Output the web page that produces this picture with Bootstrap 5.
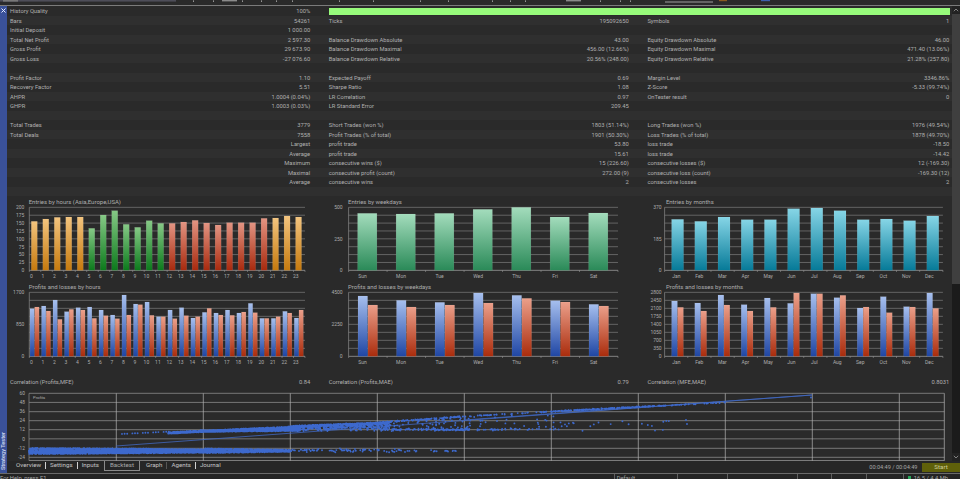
<!DOCTYPE html>
<html lang="en"><head><meta charset="utf-8">
<link href="https://cdn.jsdelivr.net/npm/bootstrap@5.3.0/dist/css/bootstrap.min.css" rel="stylesheet">
<style>
html,body{height:479px;overflow:hidden;background:#2a2a2a;}
body{font-family:Roboto,"Liberation Sans",sans-serif;font-size:5.8px;color:#b0b0b0;line-height:10px;width:960px;}
svg{display:block;}
svg text{font-family:Roboto,"Liberation Sans",sans-serif;fill:#adadad;}
.mainrow{height:467px;}
.sidebar{width:7px;background:#3a5199;flex:none;}
.sideclose{padding:2px 0 0 1px;}
.sidetitle{writing-mode:vertical-rl;transform:rotate(180deg);font-size:5.6px;line-height:7px;font-weight:500;color:#d3dbf2;padding-top:3px;}
.rightcol{width:953px;flex:none;}
.upperarea{height:455px;}
.scrollarea{width:945px;flex:none;}
.scrollcol{width:8px;flex:none;background:#1b1b1b;}
.scrollbtn{height:8px;background:#222;padding:2px 1px;}
.scrollthumb{height:270px;background:#3f3f3f;}
.strow{display:grid;grid-template-columns:318.7px 318.7px 1fr;height:9.5px;white-space:nowrap;}
.strow:nth-child(odd){background:#2a2a2a;}
.strow:nth-child(even){background:#2f2f2f;}
.stcell{display:flex;justify-content:space-between;padding:0 15.5px 0 3px;}
.stcell:last-child{padding-right:2.7px;}
.qbar{grid-column:2/4;background:#97fb7b;margin:1.5px 2px 1px 3px;}
.chartsrow{height:180.5px;background:#2a2a2a;}
.chartbox{width:318.7px;flex:none;}
.chartbox:last-child{width:307.6px;}
.tabsrow{height:12px;background:#262626;padding-left:5px;}
.tabitem{color:#c4c4c4;font-size:6.2px;line-height:7px;padding:0 4px 0 4px;border-right:1px solid #d0d0d0;margin-top:1px;height:7px;white-space:nowrap;}
.tabitem.lastone{border-right:0;}
.tabitem.dimsep{border-right-color:#555;}
.tabitem.activetab{border:1px solid #8b8b8b;border-top:0;height:10px;margin-top:0;padding:1px 5px 0;margin-left:1px;margin-right:2px;color:#a8a8a8;line-height:7px;}
.tabspacer{flex:1 1 auto;}
.timertext{color:#a6a6a6;font-size:5.6px;line-height:9px;margin-top:1.5px;margin-right:4.5px;}
.startbtn{background:#5f600a;color:#cfcf9a;width:38px;height:9px;line-height:9px;text-align:center;margin-top:1.5px;font-size:6.2px;}
.statusbar{display:grid;grid-template-columns:613.7px 63.6px 49.4px 70.6px 34px 35px 36.4px 1fr;height:6px;border-top:1px solid #6a6a6a;background:#242424;line-height:8px;color:#a8a8a8;white-space:nowrap;}
.statcell{border-left:1px solid #5f5f5f;padding-left:2px;height:6px;}
.statcell:first-child{border-left:0;padding-left:0;}
.statcell.memcell{padding-left:4px;display:flex;gap:3px;}
.memdot{width:3px;height:3px;background:#26a65a;margin-top:2px;}
</style></head><body>
<svg width="960" height="6" viewBox="0 0 960 6" aria-hidden="true">
<rect width="960" height="6" fill="#2a2a2a"/>
<rect x="0" y="0" width="176" height="1.6" fill="#4d4d58"/><rect x="3" y="0" width="15" height="1.6" fill="#777"/>
<rect x="222" y="0" width="15" height="1.4" fill="#8a8a8a"/><rect x="566" y="0" width="15" height="1.4" fill="#8a8a8a"/>
<g fill="#ddd"><rect x="193" y="0.6" width="1" height="1"/><rect x="213" y="0.6" width="1" height="1"/><rect x="242" y="0.6" width="1" height="1"/><rect x="261" y="0.6" width="1" height="1"/><rect x="276" y="0.6" width="1" height="1"/><rect x="292" y="0.6" width="1" height="1"/><rect x="339" y="0.6" width="1" height="1"/><rect x="373" y="0.6" width="1" height="1"/><rect x="420" y="0.6" width="1" height="1"/><rect x="448" y="0.6" width="1" height="1"/><rect x="492" y="0.6" width="1" height="1"/><rect x="510" y="0.6" width="1" height="1"/><rect x="525" y="0.6" width="1" height="1"/><rect x="600" y="0.6" width="1" height="1"/><rect x="620" y="0.6" width="1" height="1"/><rect x="630" y="0.6" width="1" height="1"/></g>
<rect x="665" y="1.6" width="48" height="0.8" fill="#bbb"/><rect x="719" y="0" width="8" height="1.2" fill="#8a5a20"/><rect x="761" y="0" width="9" height="1.2" fill="#3d5fae"/>
<rect x="0" y="5" width="960" height="1" fill="#7b7b7b"/>
</svg>
<div class="mainrow d-flex">
 <div class="sidebar d-flex flex-column justify-content-between">
  <div class="sideclose"><svg width="5" height="5" viewBox="0 0 5 5"><path d="M.5.5l4 4M4.5.5l-4 4" stroke="#e6ecff" stroke-width="1"/></svg></div>
  <div class="sidetitle">Strategy Tester</div>
 </div>
 <div class="rightcol">
  <div class="upperarea d-flex">
   <div class="scrollarea">
    <div>
     <div class="strow"><div class="stcell"><span>History Quality</span><span>100%</span></div><div class="qbar"></div></div>
     <div class="strow"><div class="stcell"><span>Bars</span><span>54261</span></div><div class="stcell"><span>Ticks</span><span>195092650</span></div><div class="stcell"><span>Symbols</span><span>1</span></div></div>
     <div class="strow"><div class="stcell"><span>Initial Deposit</span><span>1 000.00</span></div><div class="stcell"></div><div class="stcell"></div></div>
     <div class="strow"><div class="stcell"><span>Total Net Profit</span><span>2 597.30</span></div><div class="stcell"><span>Balance Drawdown Absolute</span><span>43.00</span></div><div class="stcell"><span>Equity Drawdown Absolute</span><span>46.00</span></div></div>
     <div class="strow"><div class="stcell"><span>Gross Profit</span><span>29 673.90</span></div><div class="stcell"><span>Balance Drawdown Maximal</span><span>456.00 (12.66%)</span></div><div class="stcell"><span>Equity Drawdown Maximal</span><span>471.40 (13.06%)</span></div></div>
     <div class="strow"><div class="stcell"><span>Gross Loss</span><span>-27 076.60</span></div><div class="stcell"><span>Balance Drawdown Relative</span><span>20.56% (248.00)</span></div><div class="stcell"><span>Equity Drawdown Relative</span><span>21.28% (257.80)</span></div></div>
     <div class="strow"></div>
     <div class="strow"><div class="stcell"><span>Profit Factor</span><span>1.10</span></div><div class="stcell"><span>Expected Payoff</span><span>0.69</span></div><div class="stcell"><span>Margin Level</span><span>3346.86%</span></div></div>
     <div class="strow"><div class="stcell"><span>Recovery Factor</span><span>5.51</span></div><div class="stcell"><span>Sharpe Ratio</span><span>1.08</span></div><div class="stcell"><span>Z-Score</span><span>-5.33 (99.74%)</span></div></div>
     <div class="strow"><div class="stcell"><span>AHPR</span><span>1.0004 (0.04%)</span></div><div class="stcell"><span>LR Correlation</span><span>0.97</span></div><div class="stcell"><span>OnTester result</span><span>0</span></div></div>
     <div class="strow"><div class="stcell"><span>GHPR</span><span>1.0003 (0.03%)</span></div><div class="stcell"><span>LR Standard Error</span><span>209.45</span></div><div class="stcell"></div></div>
     <div class="strow"></div>
     <div class="strow"><div class="stcell"><span>Total Trades</span><span>3779</span></div><div class="stcell"><span>Short Trades (won %)</span><span>1803 (51.14%)</span></div><div class="stcell"><span>Long Trades (won %)</span><span>1976 (49.54%)</span></div></div>
     <div class="strow"><div class="stcell"><span>Total Deals</span><span>7558</span></div><div class="stcell"><span>Profit Trades (% of total)</span><span>1901 (50.30%)</span></div><div class="stcell"><span>Loss Trades (% of total)</span><span>1878 (49.70%)</span></div></div>
     <div class="strow"><div class="stcell"><span></span><span>Largest</span></div><div class="stcell"><span>profit trade</span><span>53.80</span></div><div class="stcell"><span>loss trade</span><span>-18.50</span></div></div>
     <div class="strow"><div class="stcell"><span></span><span>Average</span></div><div class="stcell"><span>profit trade</span><span>15.61</span></div><div class="stcell"><span>loss trade</span><span>-14.42</span></div></div>
     <div class="strow"><div class="stcell"><span></span><span>Maximum</span></div><div class="stcell"><span>consecutive wins ($)</span><span>15 (226.60)</span></div><div class="stcell"><span>consecutive losses ($)</span><span>12 (-169.30)</span></div></div>
     <div class="strow"><div class="stcell"><span></span><span>Maximal</span></div><div class="stcell"><span>consecutive profit (count)</span><span>272.00 (9)</span></div><div class="stcell"><span>consecutive loss (count)</span><span>-169.30 (12)</span></div></div>
     <div class="strow"><div class="stcell"><span></span><span>Average</span></div><div class="stcell"><span>consecutive wins</span><span>2</span></div><div class="stcell"><span>consecutive losses</span><span>2</span></div></div>
     <div class="strow"></div>
    </div>
    <div class="chartsrow d-flex" id="charts"></div>
    <div class="strow"><div class="stcell"><span>Correlation (Profits,MFE)</span><span>0.84</span></div><div class="stcell"><span>Correlation (Profits,MAE)</span><span>0.79</span></div><div class="stcell"><span>Correlation (MFE,MAE)</span><span>0.8031</span></div></div>
    <div id="scatter"></div>
   </div>
   <div class="scrollcol d-flex flex-column">
    <div class="scrollbtn"><svg width="6" height="4" viewBox="0 0 6 4"><path d="M.8 3.2L3 1l2.2 2.2" fill="none" stroke="#999" stroke-width=".8"/></svg></div>
    <div class="scrollthumb"></div>
    <div class="flex-grow-1"></div>
    <div class="scrollbtn"><svg width="6" height="4" viewBox="0 0 6 4"><path d="M.8.8L3 3l2.2-2.2" fill="none" stroke="#999" stroke-width=".8"/></svg></div>
   </div>
  </div>
  <div class="tabsrow d-flex">
   <div class="tabitem">Overview</div><div class="tabitem">Settings</div><div class="tabitem lastone">Inputs</div>
   <div class="tabitem activetab">Backtest</div>
   <div class="tabitem dimsep">Graph</div><div class="tabitem">Agents</div><div class="tabitem lastone">Journal</div>
   <div class="tabspacer"></div>
   <div class="timertext">00:04:49 / 00:04:49</div>
   <div class="startbtn">Start</div>
  </div>
 </div>
</div>
<div class="statusbar"><div class="statcell">For Help, press F1</div><div class="statcell">Default</div><div class="statcell"></div><div class="statcell"></div><div class="statcell"></div><div class="statcell"></div><div class="statcell"></div><div class="statcell memcell"><span class="memdot"></span><span>16.5 / 4.4 Mb</span></div></div>
<script>
(function(){
var grads={orange:['#f3c47e','#c67a0e'],green:['#86c986','#0c7a1c'],red:['#e39482','#a82a0e'],sea:['#a3dcbc','#2a8a58'],teal:['#86d5e6','#067a98'],blue:['#a6bfee','#1f46a4'],rust:['#eb9f8a','#aa2c0c']};
var defs='<defs>';for(var k in grads){defs+='<linearGradient id="g'+k+'" x1="0" y1="0" x2="0" y2="1"><stop offset="0" stop-color="'+grads[k][0]+'"/><stop offset="1" stop-color="'+grads[k][1]+'"/></linearGradient>';}defs+='</defs>';
function panel(o){
 var s='',L=o.left,R=o.right,T=o.top,B=o.bottom,i;
 for(i=0;i<=8;i++){var y=T+(B-T)*i/8;s+='<line x1="'+L+'" x2="'+R+'" y1="'+y+'" y2="'+y+'" stroke="'+(i==8?'#a8a8a8':'#7d7d7d')+'" stroke-width=".7"/>';}
 s+='<line x1="'+L+'" x2="'+L+'" y1="'+T+'" y2="'+B+'" stroke="#8a8a8a" stroke-width=".7"/>';
 s+='<text x="'+o.tx+'" y="'+(T-3.2)+'" font-size="6">'+o.title+'</text>';
 var yl=o.ylabels;for(i=0;i<yl.length;i++){var yy=T+(B-T)*i/(yl.length-1);s+='<text x="'+(L-o.yoff)+'" y="'+(yy+1.9)+'" font-size="5" text-anchor="end">'+yl[i]+'</text>';}
 var n=o.labels.length,p=(R-L)/n;
 for(i=0;i<=n;i++){var tx=L+p*i;s+='<line x1="'+tx+'" x2="'+tx+'" y1="'+B+'" y2="'+(B+1.6)+'" stroke="#999" stroke-width=".6"/>';}
 for(i=0;i<n;i++){s+='<text x="'+(o.lx(i))+'" y="'+(B+7.4)+'" font-size="5" text-anchor="middle">'+o.labels[i]+'</text>';}
 o.bars.forEach(function(b){s+='<rect x="'+b.x+'" y="'+b.y+'" width="'+b.w+'" height="'+(B-b.y)+'" fill="url(#g'+b.c+')" stroke="rgba(255,255,255,.18)" stroke-width=".4"/>';});
 return s;
}
function Y(v){return 190+v/3;}
var hours=[];for(var h=0;h<24;h++)hours.push(h);
var t1=[94,87,82,81,81,115,75,62,103,112,92,100,100,96,91,99,105,98,98,98,85,84,78,81];
var b1=t1.map(function(v,i){return{x:31.3+i*11.49,y:Y(v),w:6,c:i<5||i>20?'orange':(i<12?'green':'red')};});
var pb=[356,348,330,365,353,351,360,375,315,342,336,380,360,353,384,367,369,360,369,340,385,385,364,384];
var pr=[351,363,388,358,360,385,377,386,375,344,376,380,386,377,380,355,375,376,366,368,385,380,369,360];
var b2=[];pb.forEach(function(v,i){b2.push({x:30+i*11.49,y:Y(v),w:4.4,c:'blue'});b2.push({x:34.7+i*11.49,y:Y(pr[i]),w:4.4,c:'rust'});});
var c1=defs+panel({left:29.3,right:305,top:Y(52),bottom:Y(241),tx:28.7,title:'Entries by hours (Asia,Europe,USA)',yoff:5,ylabels:[200,175,150,125,100,75,50,25,0],labels:hours,lx:function(i){return 31.5+i*11.49;},bars:b1})
 +panel({left:29.3,right:305,top:Y(307),bottom:Y(499),tx:28.7,title:'Profits and losses by hours',yoff:5,ylabels:[1700,850,0],labels:hours,lx:function(i){return 31.5+i*11.49;},bars:b2});
var days=['Sun','Mon','Tue','Wed','Thu','Fri','Sat'];
var t3=[70,72,70,58,52,81,69],b3=t3.map(function(v,i){return{x:357.3+i*38.5,y:Y(v),w:19.3,c:'sea'};});
var b4=[];[318,331,337,309,316,332,343].forEach(function(v,i){b4.push({x:357.7+i*38.5,y:Y(v),w:9.6,c:'blue'});});
[345,351,345,339,325,336,348].forEach(function(v,i){b4.push({x:367.7+i*38.5,y:Y(v),w:9.6,c:'rust'});});
var dx=function(i){return 362.3+i*38.5;};
var c2=panel({left:348.3,right:617.7,top:Y(52),bottom:Y(241),tx:347.7,title:'Entries by weekdays',yoff:6,ylabels:[500,250,0],labels:days,lx:dx,bars:b3})
 +panel({left:348.3,right:617.7,top:Y(307),bottom:Y(499),tx:347.7,title:'Profits and losses by weekdays',yoff:6,ylabels:[4500,2250,0],labels:days,lx:dx,bars:b4});
var mon=['Jan','Feb','Mar','Apr','May','Jun','Jul','Aug','Sep','Oct','Nov','Dec'];
var t5=[88,94,81,89,89,56,54,62,89,87,92,78],b5=t5.map(function(v,i){return{x:672+i*23.2,y:Y(v),w:12,c:'teal'};});
var b6=[];[333,339,315,344,324,340,311,323,354,320,350,309].forEach(function(v,i){b6.push({x:672+i*23.2,y:Y(v),w:5.8,c:'blue'});});
[352,363,345,363,352,309,311,316,351,368,351,355].forEach(function(v,i){b6.push({x:678+i*23.2,y:Y(v),w:5.8,c:'rust'});});
var mx=function(i){return 676.7+i*23;};
var c3=panel({left:665,right:943.3,top:Y(52),bottom:Y(241),tx:666.3,title:'Entries by months',yoff:3,ylabels:[370,185,0],labels:mon,lx:mx,bars:b5})
 +panel({left:665,right:943.3,top:Y(307),bottom:Y(499),tx:666.3,title:'Profits and losses by months',yoff:3,ylabels:[2800,2450,2100,1750,1400,1050,700,350,0],labels:mon,lx:mx,bars:b6});
var boxes=[[7,c1,318.7],[325.7,c2,318.7],[644.4,c3,307.6]];
document.getElementById('charts').innerHTML=boxes.map(function(b){return '<div class="chartbox"><svg width="'+b[2]+'" height="180.5" viewBox="'+b[0]+' 196 '+b[2]+' 180.5">'+b[1]+'</svg></div>';}).join('');
var seed=12345;function rnd(){seed=(seed*1664525+1013904223)%4294967296;return seed/4294967296;}
function gs(){return (rnd()+rnd()+rnd()-1.5)/1.5;}
var s='';
var ly=[393.3,402.4,411.7,420.7,429.7,438.8,448.3,457.3];
ly.forEach(function(y,i){s+='<line x1="29" x2="944.3" y1="'+y+'" y2="'+y+'" stroke="'+(i==5?'#5a5a5a':'#9a9a9a')+'" stroke-width="'+(i==5?1.4:.7)+'"/>';});
s+='<line x1="29" x2="944.3" y1="460.7" y2="460.7" stroke="#a8a8a8" stroke-width=".8"/>';
[29,116.3,203.3,290.3,377.3,464.3,551.3,638.3,725.3,812.3,899.3,944.3].forEach(function(x,i){s+='<line x1="'+x+'" x2="'+x+'" y1="393.3" y2="460.7" stroke="'+(i==0?'#8a8a8a':'#b5b5b5')+'" stroke-width=".7"/>';});
[60,48,36,24,12,0,-12,-24].forEach(function(v,i){s+='<text x="25" y="'+(ly[i]+1.7)+'" font-size="4.8" text-anchor="end">'+v+'</text>';});
s+='<text x="33" y="399.2" font-size="4.2">Profits</text>';
var U=[[120,434],[203,430],[290,426],[377,422.5],[464,416.5],[551,411.5],[638,407],[725,402.5],[812,395]];
function up(x){for(var i=0;i<U.length-1;i++){if(x<=U[i+1][0]){return U[i][1]+(U[i+1][1]-U[i][1])*(x-U[i][0])/(U[i+1][0]-U[i][0]);}}return 395;}
s+='<path d="M116 446L812 395L464 420" fill="none" stroke="#4168c0" stroke-width=".8"/>';
var d='';function pt(x,y){d+='M'+x.toFixed(1)+' '+y.toFixed(1)+'h.01';}
var i,x,tp;
for(i=0;i<2400;i++){x=29+rnd()*176;pt(x,451-(3.2-(x-29)/120)+rnd()*(6.4-(x-29)/60));}
for(i=0;i<900;i++){x=205+rnd()*85;var hw=2.4-(x-205)/60;pt(x,450.8-hw+rnd()*2*hw);}
for(i=0;i<70;i++){x=290+rnd()*110;pt(x,450.5+gs()*2.6);}
for(i=0;i<16;i++){x=400+rnd()*60;pt(x,451+gs()*1.5);}
pt(446,450.8);pt(448,451.5);pt(453,450.6);pt(455,450.8);
for(i=0;i<20;i++){x=122+i*2.6;if(i%4!=3)pt(x,up(x));}
for(i=0;i<500;i++){x=168+rnd()*40;pt(x,up(x)+.6+rnd()*1.4);}
for(i=0;i<1500;i++){x=200+rnd()*100;var w=(x-200)/100*3.6+1.2;pt(x,up(x)+.6+rnd()*w);}
for(i=0;i<700;i++){x=290+rnd()*100;tp=up(x);pt(x,tp+rnd()*rnd()*(431.5-tp));}
for(i=0;i<260;i++){x=380+rnd()*90;tp=up(x);pt(x,rnd()<.4?tp+gs()*.8:(rnd()<.5?429.5+gs()*1.5:tp+rnd()*(431-tp)));}
for(i=0;i<110;i++){x=464+rnd()*90;tp=up(x);pt(x,rnd()<.35?tp+gs()*.8:(rnd()<.5?429.5+gs()*1.5:tp+rnd()*(431-tp)));}
for(i=0;i<200;i++){x=550+rnd()*115;pt(x,up(x)+gs()*.7);}
for(i=0;i<24;i++){x=555+rnd()*115;pt(x,420+rnd()*11);}
for(i=0;i<24;i++){x=665+rnd()*60;pt(x,up(x)+gs()*.5);}
pt(686,420);pt(687,424);pt(811,397.5);pt(725,402.5);
s+='<path d="'+d+'" fill="none" stroke="#3d69cd" stroke-width="1.9" stroke-linecap="round"/>';
document.getElementById('scatter').innerHTML='<svg width="945" height="75" viewBox="7 386 945 75">'+s+'</svg>';
})();
</script>
<script src="https://cdn.jsdelivr.net/npm/bootstrap@5.3.0/dist/js/bootstrap.bundle.min.js"></script>
</body></html>
